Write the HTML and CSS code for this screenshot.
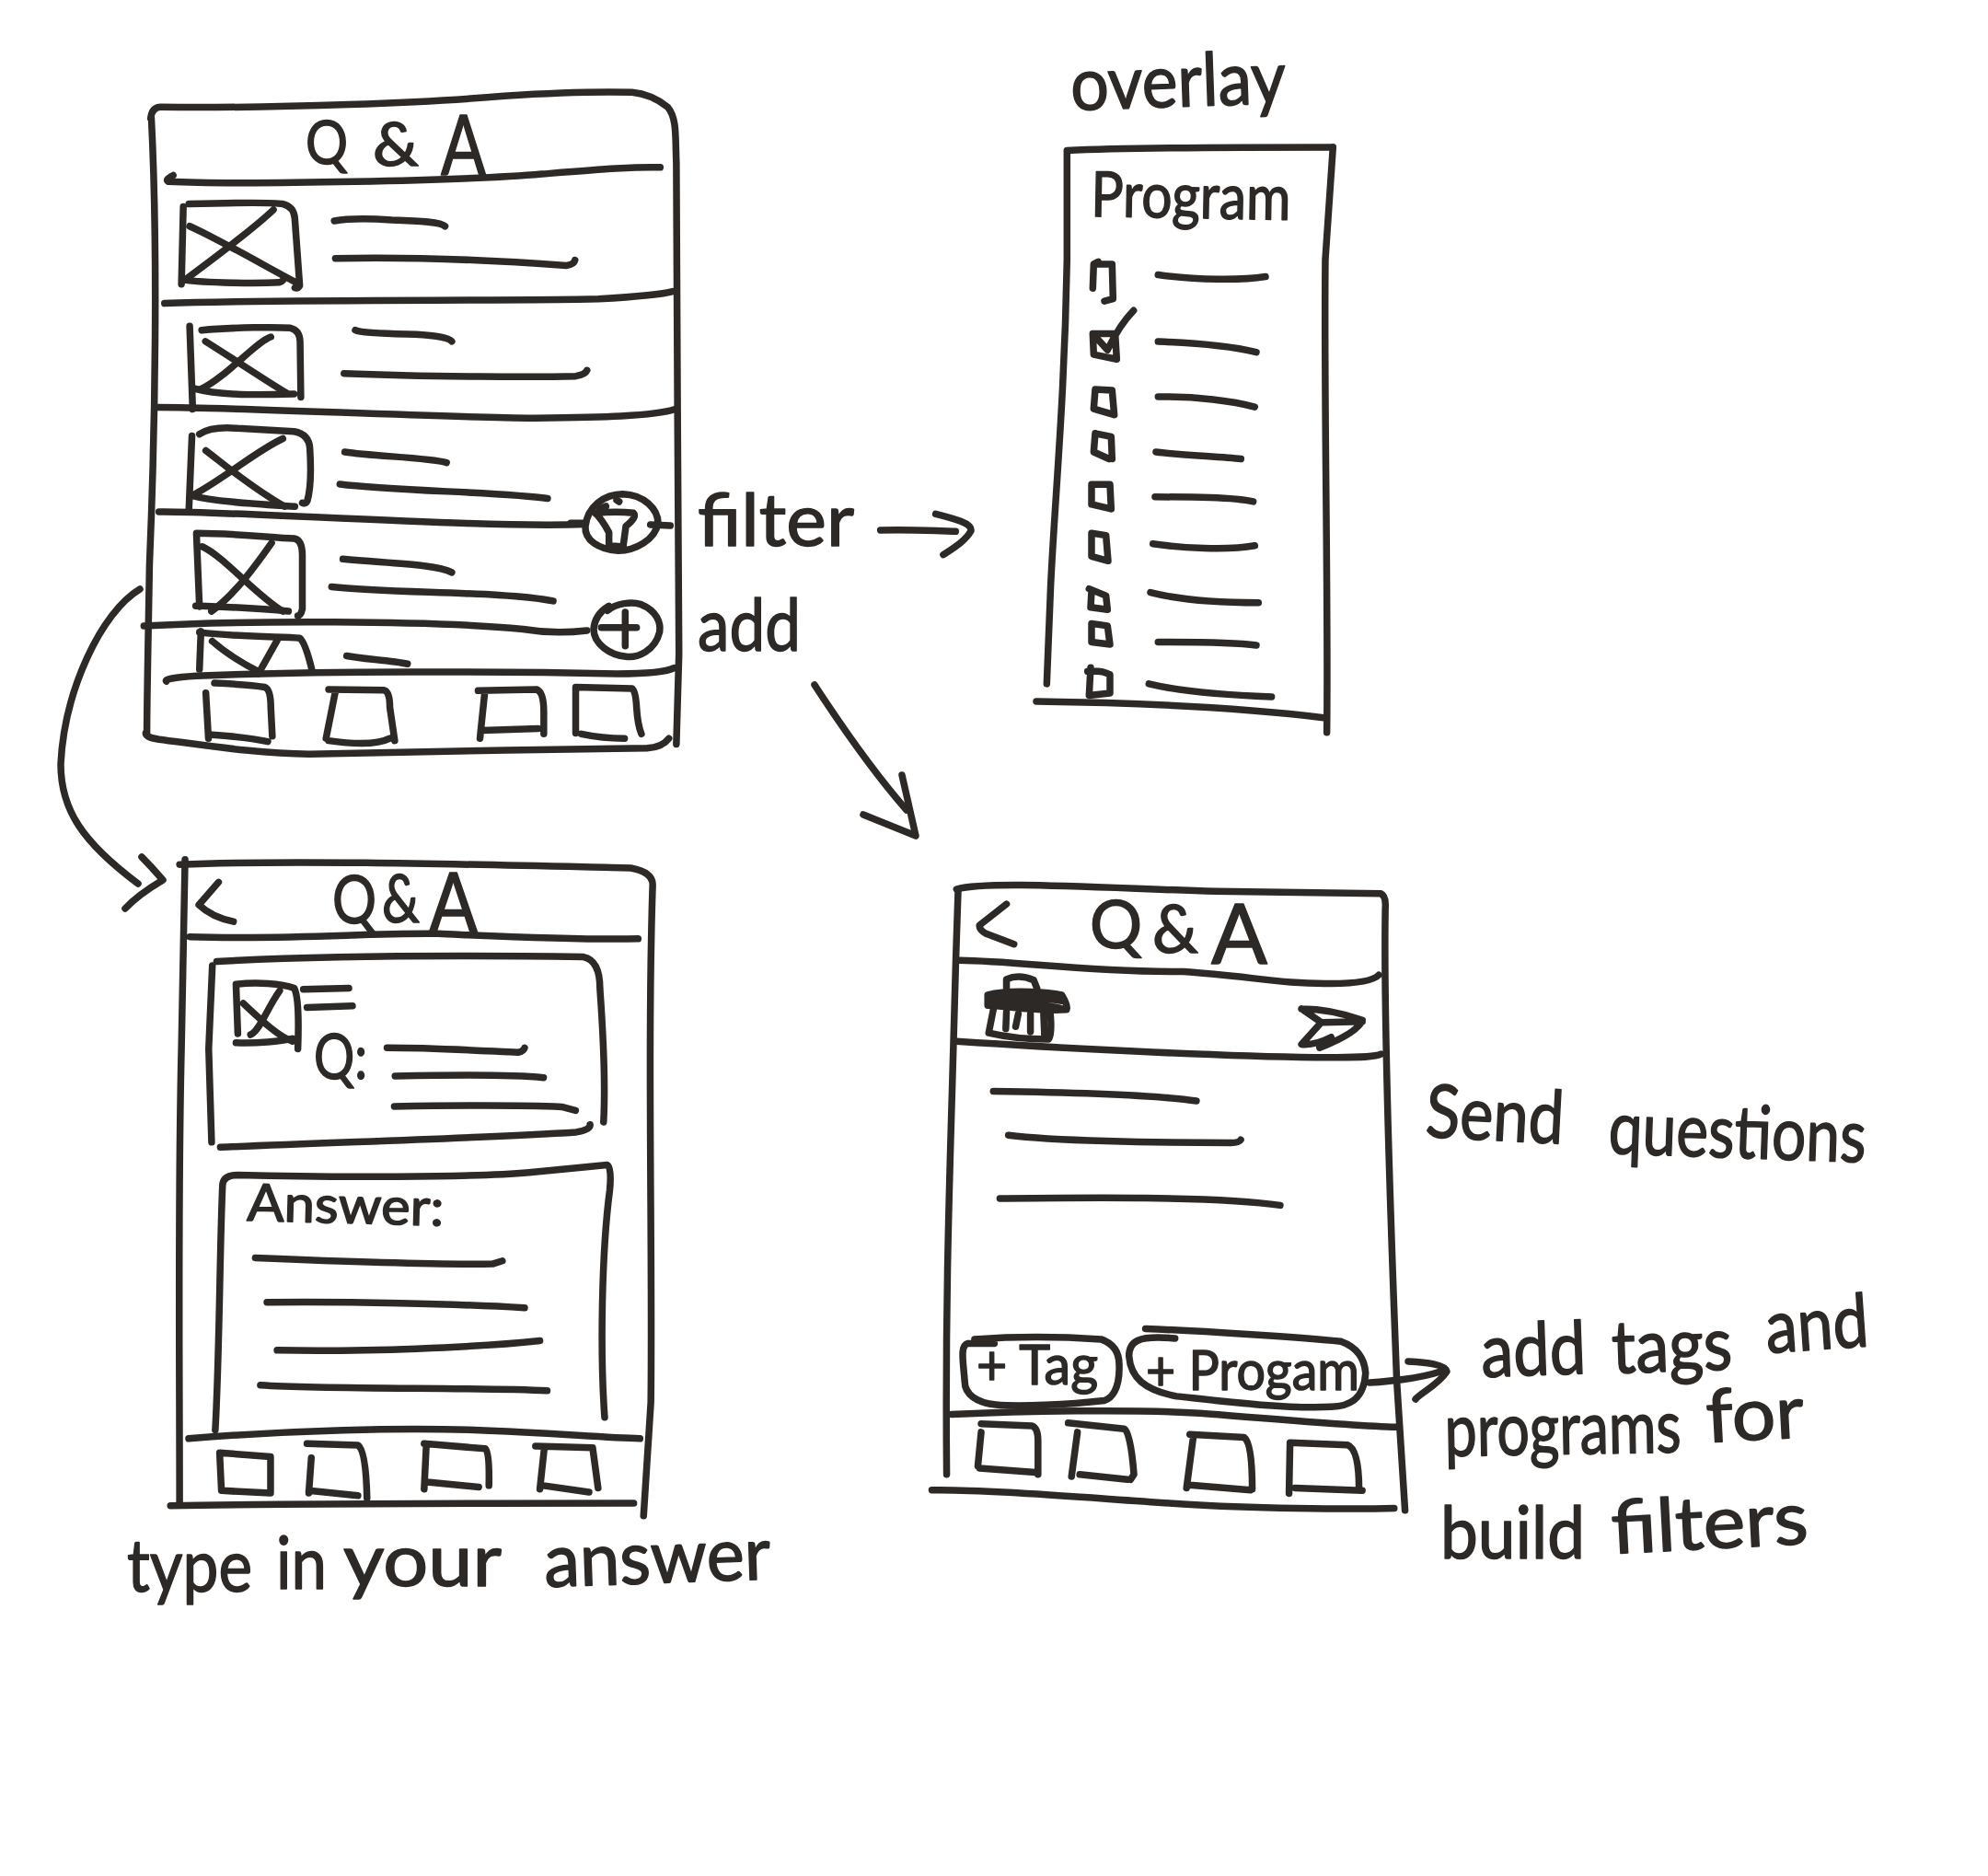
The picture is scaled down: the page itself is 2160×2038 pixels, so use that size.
FILE: index.html
```html
<!DOCTYPE html>
<html lang="en">
<head>
    <meta charset="UTF-8">
    <meta name="viewport" content="width=device-width, initial-scale=1.0">
    <title>Q&amp;A wireframe sketch</title>
    <link rel="stylesheet" href="styles.css">
</head>
<body>

<svg class="sheet" width="2160" height="2038" viewBox="0 0 2160 2038">

    <!-- list screen -->
    <g class="ink" transform="translate(140 80) scale(.408 .4847)">
        <path d="M60 100C78 400 70 800 55 1100C52 1250 48 1400 48 1480"/>
        <path d="M58 100Q62 75 85 75C400 78 800 65 1000 50C1150 42 1250 40 1340 42C1390 46 1420 65 1435 75C1460 100 1455 140 1458 200C1462 500 1460 1000 1465 1300L1458 1503"/>
        <path d="M45 1478Q45 1488 80 1492C200 1505 350 1525 480 1525C700 1520 1100 1515 1380 1512Q1420 1510 1438 1490"/>
        <path d="M118 228Q95 238 105 242C300 250 900 240 1100 225C1250 215 1350 208 1415 210"/>
        <path d="M95 515C400 505 1000 510 1250 505C1350 500 1420 495 1448 488"/>
        <path d="M78 748C300 748 800 770 1080 772C1250 770 1400 768 1455 752"/>
        <path d="M80 982C200 980 600 1000 900 1008C1050 1012 1150 1012 1215 1010"/>
        <path d="M40 1238C300 1225 800 1225 1050 1245C1120 1255 1180 1252 1220 1248"/>
        <path d="M100 1362Q90 1355 180 1350C500 1338 1000 1340 1300 1345C1380 1345 1430 1342 1452 1332"/>

        <path d="M145 298L140 472M160 292C250 290 380 288 410 292Q440 298 442 325L455 475Q450 482 442 480M148 462C200 470 350 470 400 468Q415 465 412 455"/>
        <path d="M385 305C330 350 200 430 150 462M162 342C260 380 380 440 450 470"/>
        <path d="M162 566L170 752M194 575C280 568 400 568 430 570Q455 575 456 600L458 725M175 706C240 722 350 720 440 718"/>
        <path d="M378 590C340 600 260 680 190 708M204 600C280 640 350 680 420 716"/>
        <path d="M168 812L160 975M188 808Q220 790 290 795L440 802Q480 808 482 840C485 880 485 930 475 958Q470 965 462 962M165 945C230 960 350 965 442 970"/>
        <path d="M410 818C340 845 250 910 170 945M205 845C260 880 330 930 415 970"/>
        <path d="M180 1032L188 1195M180 1030C280 1030 380 1040 440 1042Q462 1045 462 1080L462 1200Q458 1215 450 1215M178 1193C260 1195 350 1198 425 1205"/>
        <path d="M380 1052C340 1100 280 1170 220 1205M195 1060C250 1080 340 1170 410 1205"/>
        <path d="M192 1250L188 1335M188 1252C280 1262 400 1262 455 1265Q470 1275 488 1338M222 1272C260 1300 310 1325 345 1340M395 1270L345 1345"/>

        <path d="M547 330Q600 322 700 328C780 330 830 332 842 342"/>
        <path d="M550 414C750 410 1000 420 1165 430Q1185 428 1188 418"/>
        <path d="M603 575Q620 582 740 584C800 585 850 590 860 600"/>
        <path d="M573 672C800 680 1100 680 1190 678Q1215 675 1220 665"/>
        <path d="M575 848C650 858 800 860 846 872"/>
        <path d="M562 920C700 935 1000 938 1115 952"/>
        <path d="M570 1088C700 1098 820 1100 860 1118"/>
        <path d="M540 1150C700 1165 1000 1160 1130 1182"/>
        <path d="M580 1305C620 1312 700 1315 742 1323"/>

        <path d="M228 1366C280 1368 340 1372 362 1375Q378 1380 378 1420L382 1485M205 1388L212 1490M222 1482C280 1485 330 1490 370 1497"/>
        <path d="M532 1380L680 1382Q695 1385 695 1420L708 1495M550 1385L525 1490M532 1495C590 1502 660 1505 695 1490"/>
        <path d="M930 1383L1085 1380Q1105 1385 1105 1430L1105 1480M948 1385L935 1490M940 1472L1090 1468"/>
        <path d="M1190 1478L1190 1375L1340 1378Q1350 1385 1352 1420Q1355 1460 1365 1480M1205 1480C1250 1488 1290 1490 1320 1490"/>
    </g>

    <!-- filter and add buttons with the arrow to the overlay -->
    <g class="ink" transform="translate(620 500) scale(.3333)">
        <path d="M48 215C55 150 110 110 170 110C240 112 285 160 285 205C275 260 210 295 155 295C90 290 45 260 48 215Z"/>
        <path d="M80 172Q150 165 205 172Q218 185 180 215L172 275M125 275L125 235Q100 190 80 172M125 278L172 282M95 158L115 150M150 130L158 135"/>
        <path d="M0 205L45 205M260 210L325 213"/>
        <path d="M120 490C150 465 200 460 230 470C280 490 295 530 290 560C275 620 220 645 180 640C130 635 75 600 75 550C78 515 100 490 125 475"/>
        <path d="M100 545L215 545M178 495L178 605"/>
        <path d="M1010 228C1100 225 1200 230 1255 232M1190 175C1250 190 1310 205 1305 230C1290 260 1250 285 1215 308"/>
    </g>

    <!-- overlay -->
    <g class="ink" transform="translate(1100 30) scale(.3333 .5038)">
        <path d="M178 270L178 500C170 800 140 1000 125 1200L112 1415"/>
        <path d="M178 265C400 258 800 258 1045 258"/>
        <path d="M1045 258L1020 500C1015 800 1030 1200 1025 1520"/>
        <path d="M78 1453C300 1455 700 1462 1015 1488"/>

        <path d="M280 505L265 510L262 562M270 510L325 510L328 585L300 590"/>
        <path d="M262 660L335 660L340 715L265 705ZM278 672L310 695Q350 640 395 610"/>
        <path d="M270 780L325 782L332 835L265 822Z"/>
        <path d="M270 875L322 882L325 930M270 875L265 915L315 930"/>
        <path d="M258 985L318 985L322 1038L258 1028Z"/>
        <path d="M258 1090L305 1095L312 1150L258 1140Z"/>
        <path d="M250 1210L305 1225L310 1255M255 1250L310 1255M258 1215L255 1250"/>
        <path d="M258 1285L310 1290L318 1330L258 1325Z"/>
        <path d="M255 1380L250 1440L318 1435L318 1395Q290 1385 245 1388"/>

        <path d="M475 533C600 545 750 545 825 537"/>
        <path d="M475 677C600 680 720 688 795 700"/>
        <path d="M475 796C600 795 720 805 790 818"/>
        <path d="M468 915C550 922 680 925 745 930"/>
        <path d="M465 1012C580 1012 720 1012 785 1022"/>
        <path d="M458 1113C550 1122 700 1128 790 1117"/>
        <path d="M450 1218C550 1235 700 1240 802 1240"/>
        <path d="M475 1325C580 1325 720 1325 795 1332"/>
        <path d="M445 1415C550 1432 720 1440 845 1443"/>
    </g>

    <!-- answer screen -->
    <g class="ink" transform="translate(120 920) scale(.3954 .5485)">
        <path d="M205 25L195 400C185 700 190 1000 190 1300"/>
        <path d="M190 35C500 25 1000 35 1430 42Q1490 50 1490 75C1475 400 1490 800 1485 1100L1465 1325"/>
        <path d="M165 1305C500 1300 1000 1300 1438 1300"/>
        <path d="M218 178C500 185 700 170 900 172C1100 178 1300 185 1450 182"/>
        <path d="M215 1172C500 1155 800 1150 1000 1155C1200 1160 1350 1170 1455 1172"/>
        <path d="M297 70L243 115Q280 140 338 148"/>

        <path d="M280 235L270 400L278 585M292 227C600 215 1000 215 1300 218Q1345 225 1345 280C1355 380 1360 480 1355 545M302 595C600 585 1000 578 1280 565Q1320 560 1318 550"/>
        <path d="M288 1155C300 1000 300 800 308 670Q310 650 350 650C600 655 1000 655 1150 645L1365 630Q1378 635 1372 680C1350 800 1345 1000 1358 1130"/>
        <path d="M345 272L350 370M345 272C400 268 470 270 505 280Q520 300 515 400M345 388C400 390 470 385 500 380"/>
        <path d="M465 285C430 320 410 365 385 372M365 310C410 340 460 375 500 385"/>

        <path d="M530 282L655 280"/>
        <path d="M540 318L665 315"/>
        <path d="M760 398C900 398 1050 405 1120 407Q1135 405 1138 398"/>
        <path d="M782 454C900 452 1100 450 1190 457"/>
        <path d="M780 514C950 512 1150 512 1240 515L1278 522"/>
        <path d="M398 814C600 820 900 828 1050 826L1077 820"/>
        <path d="M430 902C650 900 950 905 1138 913"/>
        <path d="M458 997C700 1000 1000 992 1180 978"/>
        <path d="M412 1066C600 1075 1000 1070 1200 1077"/>

        <path d="M300 1200L440 1208L440 1280L305 1275Z"/>
        <path d="M540 1182L680 1185Q702 1195 705 1290M552 1210L545 1280M545 1275L680 1285"/>
        <path d="M862 1182L1030 1192Q1042 1200 1040 1265M868 1185L862 1272M870 1258L1012 1268"/>
        <path d="M1168 1187L1325 1190L1340 1270M1192 1192L1180 1272M1190 1265L1315 1278"/>
    </g>

    <!-- send question screen -->
    <g class="ink" transform="translate(1000 950) scale(.357 .459)">
        <path d="M115 35L108 200L100 420C90 700 75 1000 80 1420"/>
        <path d="M110 35C200 15 500 30 900 40L1400 45Q1418 50 1415 80C1410 300 1430 800 1450 1200L1475 1505"/>
        <path d="M120 203C300 205 500 230 800 230C1000 240 1100 260 1250 258Q1370 258 1395 238"/>
        <path d="M110 395C400 410 900 430 1200 433C1300 432 1380 435 1402 425"/>
        <path d="M35 1457C200 1455 500 1475 800 1490C1000 1500 1300 1503 1442 1500"/>
        <path d="M95 1278C300 1270 650 1265 850 1275C1100 1290 1300 1305 1450 1308"/>
        <path d="M262 70L180 120Q178 130 200 140L285 165"/>

        <path d="M205 285C280 270 400 280 430 285Q450 310 445 320C350 325 250 310 205 310ZM205 295C300 285 400 295 440 300M210 305C300 300 400 310 440 320"/>
        <path d="M262 270L262 248Q300 235 345 250L355 270"/>
        <path d="M222 320L208 375Q290 390 390 390Q402 380 395 325M262 325L260 365M298 330L290 360M335 330L335 372M375 330L378 385"/>
        <path d="M1160 318Q1250 318 1345 345Q1330 375 1215 410M1160 318L1220 350L1160 402Q1200 405 1250 385M1222 350L1345 348"/>

        <path d="M222 513C400 515 700 520 840 536"/>
        <path d="M268 617C400 630 700 635 945 635Q970 635 975 628"/>
        <path d="M242 767C450 765 900 760 1095 783"/>

        <path d="M165 1100Q350 1090 550 1100Q605 1115 605 1160C608 1220 580 1240 560 1245C450 1255 300 1260 230 1255C170 1250 135 1230 135 1200C130 1150 120 1115 145 1110L225 1110"/>
        <path d="M685 1075C850 1080 1150 1095 1280 1105Q1350 1125 1355 1180C1350 1240 1310 1258 1250 1260C1100 1265 900 1245 780 1235C680 1220 640 1190 635 1140C635 1105 660 1090 775 1098"/>

        <path d="M185 1300L340 1305Q358 1310 358 1340L358 1420M185 1320L175 1400M180 1405L350 1415"/>
        <path d="M450 1298L620 1312Q640 1320 650 1420L640 1432M478 1320L460 1425M485 1420L630 1432"/>
        <path d="M820 1325L985 1332Q1010 1345 1010 1455M830 1335L810 1452M820 1445L1005 1457"/>
        <path d="M1122 1465L1125 1345L1300 1350Q1335 1360 1335 1455M1140 1452L1345 1458"/>
    </g>

    <!-- long arrows between the screens -->
    <g class="ink">
        <path d="M152 640C110 665 70 750 66 830C66 880 90 915 150 960"/>
        <path d="M154 931Q165 942 177 956Q150 972 136 987"/>
        <path d="M885 744C915 790 950 840 985 880"/>
        <path d="M938 885L995 908L980 842"/>
        <path d="M1488 1502C1520 1500 1550 1495 1565 1490"/>
        <path d="M1530 1479C1550 1480 1570 1482 1572 1490C1562 1505 1545 1512 1538 1520"/>
    </g>

    <!-- screen titles -->
    <text class="hand title-sm" x="332" y="178" textLength="46" lengthAdjust="spacingAndGlyphs">Q</text>
    <text class="hand title-sm" x="405" y="180" textLength="50" lengthAdjust="spacingAndGlyphs">&amp;</text>
    <text class="hand title-lg" x="479" y="190" textLength="49" lengthAdjust="spacingAndGlyphs">A</text>

    <text class="hand title-md" x="361" y="1003" textLength="48" lengthAdjust="spacingAndGlyphs">Q</text>
    <text class="hand title-md" x="415" y="1002" textLength="41" lengthAdjust="spacingAndGlyphs">&amp;</text>
    <text class="hand title-lg" x="466" y="1013" textLength="53" lengthAdjust="spacingAndGlyphs">A</text>

    <text class="hand title-md" x="1184" y="1030" textLength="57" lengthAdjust="spacingAndGlyphs">Q</text>
    <text class="hand title-md" x="1252" y="1035" textLength="50" lengthAdjust="spacingAndGlyphs">&amp;</text>
    <text class="hand title-lg" x="1316" y="1047" textLength="61" lengthAdjust="spacingAndGlyphs">A</text>

    <!-- labels inside the screens -->
    <text class="hand label" x="1185" y="235" textLength="217" lengthAdjust="spacingAndGlyphs" transform="rotate(1 1185 235)">Program</text>
    <text class="hand label" x="341" y="1172" textLength="58" lengthAdjust="spacingAndGlyphs">Q:</text>
    <text class="hand small" x="268" y="1326" textLength="214" lengthAdjust="spacingAndGlyphs" transform="rotate(1.5 268 1326)">Answer:</text>
    <text class="hand chip" x="1061" y="1504" textLength="132" lengthAdjust="spacingAndGlyphs">+ Tag</text>
    <text class="hand chip" x="1245" y="1510" textLength="232" lengthAdjust="spacingAndGlyphs">+ Progam</text>

    <!-- notes round the screens -->
    <text class="hand note" x="1164" y="120" textLength="234" lengthAdjust="spacingAndGlyphs" transform="rotate(-2 1164 120)">overlay</text>
    <text class="hand note" x="758" y="593" textLength="170" lengthAdjust="spacingAndGlyphs">filter</text>
    <text class="hand note" x="758" y="707" textLength="112" lengthAdjust="spacingAndGlyphs">add</text>

    <text class="hand note" x="1548" y="1235" textLength="150" lengthAdjust="spacingAndGlyphs" transform="rotate(3 1548 1235)">Send</text>
    <text class="hand note" x="1747" y="1253" textLength="280" lengthAdjust="spacingAndGlyphs" transform="rotate(2 1747 1253)">questions</text>

    <text class="hand note" x="1610" y="1496" textLength="114" lengthAdjust="spacingAndGlyphs" transform="rotate(-2 1610 1496)">add</text>
    <text class="hand note" x="1752" y="1492" textLength="131" lengthAdjust="spacingAndGlyphs" transform="rotate(-2 1752 1492)">tags</text>
    <text class="hand note" x="1920" y="1470" textLength="112" lengthAdjust="spacingAndGlyphs" transform="rotate(-4 1920 1470)">and</text>

    <text class="hand note" x="1570" y="1582" textLength="257" lengthAdjust="spacingAndGlyphs" transform="rotate(-1 1570 1582)">programs</text>
    <text class="hand note" x="1855" y="1567" textLength="106" lengthAdjust="spacingAndGlyphs" transform="rotate(-3 1855 1567)">for</text>

    <text class="hand note" x="1565" y="1693" textLength="157" lengthAdjust="spacingAndGlyphs">build</text>
    <text class="hand note" x="1752" y="1688" textLength="214" lengthAdjust="spacingAndGlyphs" transform="rotate(-3 1752 1688)">filters</text>

    <text class="hand note" x="138" y="1729" textLength="136" lengthAdjust="spacingAndGlyphs">type</text>
    <text class="hand note" x="300" y="1726" textLength="55" lengthAdjust="spacingAndGlyphs">in</text>
    <text class="hand note" x="373" y="1723" textLength="172" lengthAdjust="spacingAndGlyphs">your</text>
    <text class="hand note" x="592" y="1724" textLength="246" lengthAdjust="spacingAndGlyphs" transform="rotate(-2 592 1724)">answer</text>
</svg>

</body>
</html>
```

FILE: styles.css
```css
html, body {
    margin: 0;
    padding: 0;
    background: #fff;
}
.sheet {
    display: block;
}
.ink {
    fill: none;
    stroke: #2d2926;
    stroke-width: 7.5;
    stroke-linecap: round;
    stroke-linejoin: round;
}
/* the groups are stretched, the pen stays the same width */
.ink path {
    vector-effect: non-scaling-stroke;
}
.hand {
    font-family: Lato, "Open Sans", sans-serif;
    fill: #2d2926;
    stroke: #2d2926;
    stroke-width: 1.5;
    stroke-linejoin: round;
}
.title-sm { font-size: 66px; }
.title-md { font-size: 72px; }
.title-lg { font-size: 92px; }
.label { font-size: 68px; }
.small { font-size: 56px; }
.chip { font-size: 60px; }
.note { font-size: 80px; }
```
